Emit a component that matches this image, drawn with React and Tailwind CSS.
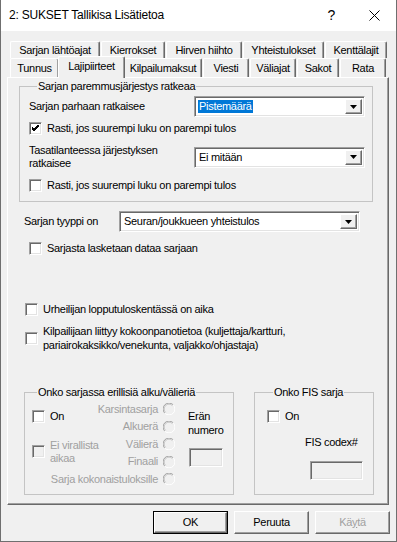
import React from "react";

const sunken =
  "border border-t-[#a0a0a0] border-l-[#a0a0a0] border-r-white border-b-white shadow-[inset_1px_1px_0_#696969,inset_-1px_-1px_0_#e3e3e3]";
const raised =
  "border border-t-white border-l-white border-r-[#696969] border-b-[#696969] shadow-[inset_-1px_-1px_0_#a0a0a0]";

const Checkbox = ({ checked = false, disabled = false }) => (
  <div
    className={`w-[13px] h-[13px] shrink-0 flex items-center justify-center ${sunken} ${
      disabled ? "bg-[#f0f0f0]" : "bg-white"
    }`}
  >
    {checked && (
      <svg width="7" height="7" viewBox="0 0 7 7">
        <path d="M0 3 L2 5 L7 0 M0 4 L2 6 L7 1 M0 2 L2 4 L7 -1" stroke="#000" strokeWidth="1" fill="none" />
      </svg>
    )}
  </div>
);

const Radio = () => (
  <svg width="12" height="12" viewBox="0 0 12 12" className="shrink-0">
    <circle cx="6" cy="6" r="5.5" fill="#f0f0f0" />
    <path d="M1.8 10.2 A5.5 5.5 0 0 1 10.2 1.8" stroke="#a0a0a0" fill="none" />
    <path d="M10.2 1.8 A5.5 5.5 0 0 1 1.8 10.2" stroke="#ffffff" fill="none" />
    <path d="M2.6 9.4 A4.5 4.5 0 0 1 9.4 2.6" stroke="#c8c8c8" fill="none" />
  </svg>
);

const Combo = ({ value, selected = false, width }) => (
  <div className={`flex h-[21px] bg-white p-[2px] ${sunken} ${width}`}>
    <div className="flex-1 flex items-center pl-[1px]">
      <span className={selected ? "bg-[#0078d7] text-white px-[1px]" : "px-[1px]"}>{value}</span>
    </div>
    <div className={`w-[17px] h-full bg-[#f0f0f0] flex items-center justify-center ${raised}`}>
      <svg width="7" height="4" viewBox="0 0 7 4">
        <path d="M0 0 H7 L3.5 4 Z" fill="#000" />
      </svg>
    </div>
  </div>
);

const Tab = ({ label, width }) => (
  <div
    className={`h-full flex items-center justify-center bg-[#f0f0f0] border-t border-l border-white border-r border-r-[#696969] shadow-[inset_-1px_0_0_#a0a0a0] rounded-t-[2px] ${width}`}
  >
    {label}
  </div>
);

const Button = ({ label, isDefault = false, disabled = false }) => (
  <div className={`w-[75px] h-[23px] ${isDefault ? "border border-black" : ""}`}>
    <div
      className={`w-full h-full flex items-center justify-center bg-[#f0f0f0] ${raised} ${
        disabled ? "text-[#a0a0a0]" : ""
      }`}
    >
      {label}
    </div>
  </div>
);

const App = () => {
  return (
    <div className="w-[397px] h-[542px] bg-[#f0f0f0] border-l border-r border-b border-[#6f6f6f] flex flex-col font-['Liberation_Sans',Arial,sans-serif] text-[11px] tracking-[-0.3px] text-black leading-[13px]">
      {/* title bar */}
      <div className="h-[31px] bg-white flex items-center pl-[8px] pr-[16px] shrink-0">
        <span className="text-[12px] tracking-[-0.2px]">2: SUKSET Tallikisa Lisätietoa</span>
        <span className="ml-auto text-[14px] mr-[34px]">?</span>
        <svg width="11" height="11" viewBox="0 0 11 11">
          <path d="M0.5 0.5 L10.5 10.5 M10.5 0.5 L0.5 10.5" stroke="#000" strokeWidth="1" />
        </svg>
      </div>

      {/* tabs */}
      <div className="ml-[9px] mt-[10px] flex flex-col">
        <div className="flex gap-[1px] h-[17px]">
          <Tab label="Sarjan lähtöajat" width="w-[90px]" />
          <Tab label="Kierrokset" width="w-[64px]" />
          <Tab label="Hirven hiihto" width="w-[76px]" />
          <Tab label="Yhteistulokset" width="w-[81px]" />
          <Tab label="Kenttälajit" width="w-[62px]" />
        </div>
        <div className="flex gap-[1px] h-[19px] items-start">
          <Tab label="Tunnus" width="w-[49px]" />
          <div className="relative z-10 -mx-[2px] -mt-[2px] w-[67px] h-[22px] flex items-start pt-[3px] justify-center bg-[#f0f0f0] border-t border-l border-white border-r border-r-[#696969] shadow-[inset_-1px_0_0_#a0a0a0] rounded-t-[2px]">
            Lajipiirteet
          </div>
          <Tab label="Kilpailumaksut" width="w-[78px]" />
          <Tab label="Viesti" width="w-[46px]" />
          <Tab label="Väliajat" width="w-[46px]" />
          <Tab label="Sakot" width="w-[42px]" />
          <Tab label="Rata" width="w-[46px]" />
        </div>
      </div>

      {/* panel */}
      <div className="ml-[6px] w-[382px] h-[428px] flex flex-col border-t border-l border-white border-r border-b border-r-[#696969] border-b-[#696969] shadow-[inset_-1px_-1px_0_#a0a0a0]">
        <fieldset className="ml-[11px] mt-[2px] w-[354px] border border-[#c4c4c4] pl-[9px] pb-[9px]">
          <legend className="ml-[8px] px-[1px]">Sarjan paremmusjärjestys ratkeaa</legend>
          <div className="flex items-center h-[21px] mt-[3px]">
            <div className="w-[165px]">Sarjan parhaan ratkaisee</div>
            <Combo value="Pistemäärä" selected width="w-[171px]" />
          </div>
          <div className="flex items-center h-[13px] mt-[5px] gap-[5px]">
            <Checkbox checked />
            <span>Rasti, jos suurempi luku on parempi tulos</span>
          </div>
          <div className="flex items-center h-[26px] mt-[9px]">
            <div className="w-[165px]">
              Tasatilanteessa järjestyksen
              <br />
              ratkaisee
            </div>
            <Combo value="Ei mitään" width="w-[171px]" />
          </div>
          <div className="flex items-center h-[13px] mt-[9px] gap-[5px]">
            <Checkbox />
            <span>Rasti, jos suurempi luku on parempi tulos</span>
          </div>
        </fieldset>

        <div className="flex items-center h-[21px] mt-[9px] ml-[16px]">
          <div className="w-[95px]">Sarjan tyyppi on</div>
          <Combo value="Seuran/joukkueen yhteistulos" width="w-[241px]" />
        </div>
        <div className="flex items-center h-[13px] mt-[10px] ml-[21px] gap-[5px]">
          <Checkbox />
          <span>Sarjasta lasketaan dataa sarjaan</span>
        </div>
        <div className="flex items-center h-[13px] mt-[48px] ml-[17px] gap-[5px]">
          <Checkbox />
          <span>Urheilijan lopputuloskentässä on aika</span>
        </div>
        <div className="flex items-center h-[28px] mt-[8px] ml-[17px] gap-[5px] leading-[14px]">
          <Checkbox />
          <span>
            Kilpailijaan liittyy kokoonpanotietoa (kuljettaja/kartturi,
            <br />
            pariairokaksikko/venekunta, valjakko/ohjastaja)
          </span>
        </div>

        <div className="flex mt-[34px] ml-[16px] gap-[20px]">
          <fieldset className="w-[210px] h-[109px] border border-[#c4c4c4] pl-[7px]">
            <legend className="ml-[5px] px-[1px]">Onko sarjassa erillisiä alku/välieriä</legend>
            <div className="grid grid-cols-[60px_70px_1fr] grid-rows-[18px_17px_18px_17px_18px] gap-x-[13px] mt-[1px]">
              <div className="row-span-2 flex items-center gap-[5px] -mt-[2px]">
                <Checkbox />
                <span>On</span>
              </div>
              <div className="flex items-center justify-end gap-[5px] text-[#a0a0a0] whitespace-nowrap">
                Karsintasarja <Radio />
              </div>
              <div className="row-span-5 flex flex-col pt-[9px] leading-[14px]">
                <span>Erän</span>
                <span>numero</span>
                <div className={`mt-[11px] ml-[1px] w-[34px] h-[19px] bg-[#f0f0f0] ${sunken}`} />
              </div>
              <div className="flex items-center justify-end gap-[5px] text-[#a0a0a0]">
                Alkuerä <Radio />
              </div>
              <div className="row-span-2 flex items-center gap-[5px] -mt-[2px]">
                <Checkbox disabled />
                <span className="text-[#a0a0a0] whitespace-nowrap">
                  Ei virallista
                  <br />
                  aikaa
                </span>
              </div>
              <div className="flex items-center justify-end gap-[5px] text-[#a0a0a0]">
                Välierä <Radio />
              </div>
              <div className="flex items-center justify-end gap-[5px] text-[#a0a0a0]">
                Finaali <Radio />
              </div>
              <div className="col-span-2 flex items-center justify-end gap-[5px] text-[#a0a0a0]">
                Sarja kokonaistuloksille <Radio />
              </div>
            </div>
          </fieldset>

          <fieldset className="w-[120px] h-[109px] border border-[#c4c4c4] pl-[12px]">
            <legend className="ml-[6px] px-[1px]">Onko FIS sarja</legend>
            <div className="flex items-center h-[13px] mt-[11px] gap-[5px]">
              <Checkbox />
              <span>On</span>
            </div>
            <div className="mt-[12px] ml-[38px] leading-[14px]">FIS codex#</div>
            <div className={`mt-[12px] ml-[43px] w-[53px] h-[19px] bg-[#f0f0f0] ${sunken}`} />
          </fieldset>
        </div>
      </div>

      {/* buttons */}
      <div className="flex justify-end gap-[6px] mt-[6px] pr-[6px]">
        <Button label="OK" isDefault />
        <Button label="Peruuta" />
        <Button
          label={
            <span>
              Kä<span className="underline">y</span>tä
            </span>
          }
          disabled
        />
      </div>
    </div>
  );
};

export default App;
